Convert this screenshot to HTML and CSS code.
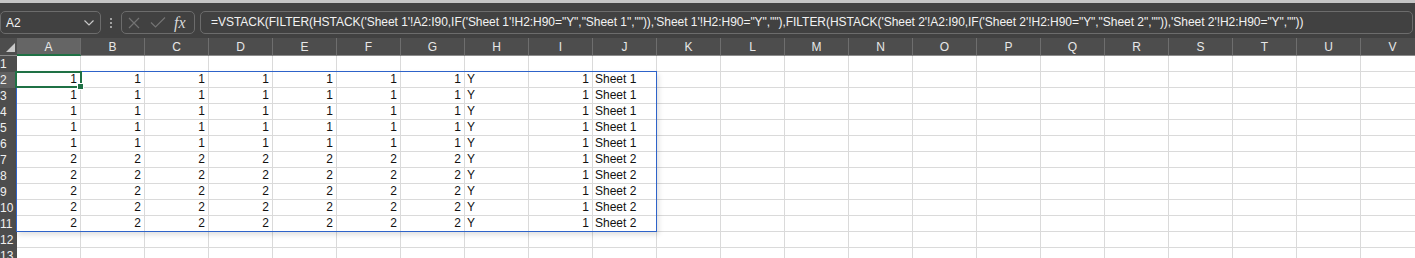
FILE: index.html
```html
<!DOCTYPE html>
<html>
<head>
<meta charset="utf-8">
<link rel="stylesheet" href="styles.css">
</head>
<body>
<div class="app">
  <div class="fbar">
    <div class="namebox"><span class="nb-text">A2</span>
      <svg class="chev" width="10" height="6" viewBox="0 0 10 6"><path d="M0.5 0.5 L5 5 L9.5 0.5" fill="none" stroke="#c8c8c8" stroke-width="1.2"/></svg>
    </div>
    <div class="dots"><i></i><i></i><i></i></div>
    <div class="fxbox">
      <svg width="12" height="12" viewBox="0 0 12 12" class="ic-x"><path d="M1 1 L11 11 M11 1 L1 11" stroke="#737373" stroke-width="1.2" fill="none"/></svg>
      <svg width="16" height="11" viewBox="0 0 16 11" class="ic-ok"><path d="M1 5.5 L5.5 10 L15 0.5" stroke="#737373" stroke-width="1.2" fill="none"/></svg>
      <span class="fx">fx</span>
    </div>
    <div class="formula">=VSTACK(FILTER(HSTACK('Sheet 1'!A2:I90,IF('Sheet 1'!H2:H90="Y","Sheet 1","")),'Sheet 1'!H2:H90="Y",""),FILTER(HSTACK('Sheet 2'!A2:I90,IF('Sheet 2'!H2:H90="Y","Sheet 2","")),'Sheet 2'!H2:H90="Y",""))</div>
  </div>

  <div class="sheet">
    <div class="grid">
      <div class="ch corner"><span class="tri"></span></div>
      <div class="ch sel">A</div><div class="ch">B</div><div class="ch">C</div><div class="ch">D</div><div class="ch">E</div><div class="ch">F</div><div class="ch">G</div><div class="ch">H</div><div class="ch">I</div><div class="ch">J</div><div class="ch">K</div><div class="ch">L</div><div class="ch">M</div><div class="ch">N</div><div class="ch">O</div><div class="ch">P</div><div class="ch">Q</div><div class="ch">R</div><div class="ch">S</div><div class="ch">T</div><div class="ch">U</div><div class="ch">V</div>

      <div class="rh">1</div><div class="fill full"></div>

      <div class="rh rsel">2</div><div class="c n">1</div><div class="c n">1</div><div class="c n">1</div><div class="c n">1</div><div class="c n">1</div><div class="c n">1</div><div class="c n">1</div><div class="c">Y</div><div class="c n">1</div><div class="c">Sheet 1</div><div class="fill"></div>
      <div class="rh">3</div><div class="c n">1</div><div class="c n">1</div><div class="c n">1</div><div class="c n">1</div><div class="c n">1</div><div class="c n">1</div><div class="c n">1</div><div class="c">Y</div><div class="c n">1</div><div class="c">Sheet 1</div><div class="fill"></div>
      <div class="rh">4</div><div class="c n">1</div><div class="c n">1</div><div class="c n">1</div><div class="c n">1</div><div class="c n">1</div><div class="c n">1</div><div class="c n">1</div><div class="c">Y</div><div class="c n">1</div><div class="c">Sheet 1</div><div class="fill"></div>
      <div class="rh">5</div><div class="c n">1</div><div class="c n">1</div><div class="c n">1</div><div class="c n">1</div><div class="c n">1</div><div class="c n">1</div><div class="c n">1</div><div class="c">Y</div><div class="c n">1</div><div class="c">Sheet 1</div><div class="fill"></div>
      <div class="rh">6</div><div class="c n">1</div><div class="c n">1</div><div class="c n">1</div><div class="c n">1</div><div class="c n">1</div><div class="c n">1</div><div class="c n">1</div><div class="c">Y</div><div class="c n">1</div><div class="c">Sheet 1</div><div class="fill"></div>
      <div class="rh">7</div><div class="c n">2</div><div class="c n">2</div><div class="c n">2</div><div class="c n">2</div><div class="c n">2</div><div class="c n">2</div><div class="c n">2</div><div class="c">Y</div><div class="c n">1</div><div class="c">Sheet 2</div><div class="fill"></div>
      <div class="rh">8</div><div class="c n">2</div><div class="c n">2</div><div class="c n">2</div><div class="c n">2</div><div class="c n">2</div><div class="c n">2</div><div class="c n">2</div><div class="c">Y</div><div class="c n">1</div><div class="c">Sheet 2</div><div class="fill"></div>
      <div class="rh">9</div><div class="c n">2</div><div class="c n">2</div><div class="c n">2</div><div class="c n">2</div><div class="c n">2</div><div class="c n">2</div><div class="c n">2</div><div class="c">Y</div><div class="c n">1</div><div class="c">Sheet 2</div><div class="fill"></div>
      <div class="rh">10</div><div class="c n">2</div><div class="c n">2</div><div class="c n">2</div><div class="c n">2</div><div class="c n">2</div><div class="c n">2</div><div class="c n">2</div><div class="c">Y</div><div class="c n">1</div><div class="c">Sheet 2</div><div class="fill"></div>
      <div class="rh">11</div><div class="c n">2</div><div class="c n">2</div><div class="c n">2</div><div class="c n">2</div><div class="c n">2</div><div class="c n">2</div><div class="c n">2</div><div class="c">Y</div><div class="c n">1</div><div class="c">Sheet 2</div><div class="fill"></div>

      <div class="rh">12</div><div class="fill full"></div>
      <div class="rh">13</div><div class="fill full"></div>
    </div>
    <div class="spill"></div>
    <div class="active"><span class="handle"></span></div>
  </div>
</div>
</body>
</html>
```

FILE: styles.css
```css
* { box-sizing: border-box; }
html, body { margin: 0; padding: 0; }
body {
  width: 1415px;
  height: 258px;
  overflow: hidden;
  background: #ffffff;
  font-family: "Liberation Sans", Arial, sans-serif;
  font-size: 12px;
}
.app { width: 1415px; }

/* formula bar */
.fbar {
  height: 38px;
  background: #414141;
  border-top: 3px solid #c4c4c4;
  display: flex;
  align-items: flex-start;
  padding-top: 8px;
}
.namebox {
  width: 101px;
  height: 23px;
  border: 1px solid #6c6c6c;
  border-radius: 5px;
  display: flex;
  align-items: center;
  justify-content: space-between;
  padding: 0 6px 0 5px;
  color: #f2f2f2;
  font-size: 12px;
}
.chev { display: block; }
.dots {
  width: 20px;
  height: 23px;
  display: flex;
  flex-direction: column;
  align-items: center;
  justify-content: center;
  gap: 2px;
}
.dots i {
  display: block;
  width: 2px;
  height: 2px;
  background: #c0c0c0;
  border-radius: 1px;
}
.fxbox {
  width: 74px;
  height: 23px;
  border: 1px solid #6c6c6c;
  border-radius: 5px;
  display: flex;
  align-items: center;
  padding: 0 4px 0 6px;
}
.ic-x { display: block; margin-right: 10px; }
.ic-ok { display: block; margin-right: 8px; }
.fx {
  font-family: "Liberation Serif", "Times New Roman", serif;
  font-style: italic;
  font-size: 16px;
  color: #d8d8d8;
  line-height: 1;
}
.formula {
  margin-left: 5px;
  flex: 1;
  height: 23px;
  border: 1px solid #6c6c6c;
  border-radius: 5px;
  color: #f2f2f2;
  font-size: 12px;
  letter-spacing: -0.04px;
  line-height: 21px;
  padding-left: 10px;
  white-space: nowrap;
  overflow: hidden;
  margin-right: 2px;
}

/* sheet */
.sheet { position: relative; }
.grid {
  display: grid;
  grid-template-columns: 17px repeat(22, 64px);
  grid-template-rows: 18px;
  grid-auto-rows: 16px;
}
.ch {
  background: #4d4d4d;
  color: #e8e8e8;
  text-align: center;
  font-size: 12px;
  line-height: 17px;
  border-right: 1px solid #6e6e6e;
  border-bottom: 1px solid #8c8c8c;
  padding-top: 1px;
}
.ch.sel {
  background: #656565;
  border-bottom: 2px solid #1f7145;
}
.ch.corner {
  position: relative;
  border-right: none;
}
.tri {
  position: absolute;
  right: 2px;
  bottom: 3px;
  width: 0;
  height: 0;
  border-left: 9px solid transparent;
  border-bottom: 9px solid #c8c8c8;
}
.rh {
  background: #4d4d4d;
  color: #f0f0f0;
  font-size: 12px;
  line-height: 16px;
  padding-left: 0;
  white-space: nowrap;
  overflow: visible;
}
.rh.rsel { background: #606060; }
.c {
  border-right: 1px solid #dadada;
  border-bottom: 1px solid #dadada;
  color: #111111;
  font-size: 12px;
  line-height: 15px;
  padding: 0 3px 0 2px;
  white-space: nowrap;
  overflow: hidden;
}
.c.n { text-align: right; }
.fill {
  grid-column: span 12;
  border-bottom: 1px solid #dadada;
  background: repeating-linear-gradient(to right, transparent 0 63px, #dadada 63px 64px);
}
.fill.full { grid-column: span 22; }

.spill {
  position: absolute;
  left: 16px;
  top: 33px;
  width: 641px;
  height: 161px;
  border: 1px solid #2e63c9;
  box-shadow: 2px 3px 5px rgba(0, 0, 0, 0.12);
  pointer-events: none;
}
.active {
  position: absolute;
  left: 15px;
  top: 33px;
  width: 67px;
  height: 17px;
  border: 2px solid #1f7145;
}
.handle {
  position: absolute;
  right: -4px;
  bottom: -4px;
  width: 7px;
  height: 7px;
  background: #1f7145;
  border: 1px solid #ffffff;
}
```
